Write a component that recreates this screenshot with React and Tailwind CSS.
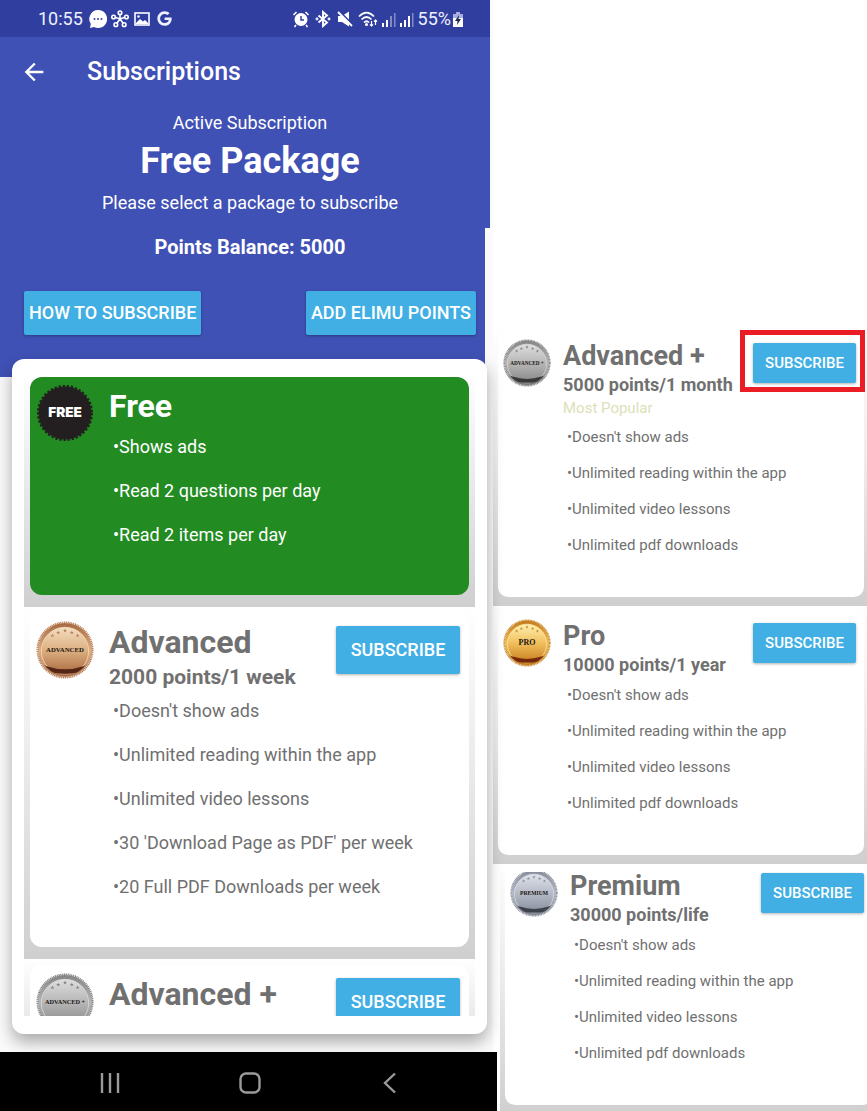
import React from 'react';
import { MdArrowBack } from 'react-icons/md';
import { FaGoogle } from 'react-icons/fa';
import clsx from 'clsx';

const METALS = {
    bronze: { rim: '#b9825c', light: '#f3ddc0', mid: '#dcae7f', dark: '#a8683f', shade: '#4a1c10' },
    silver: { rim: '#858585', light: '#dedede', mid: '#b5b5b5', dark: '#858585', shade: '#303030' },
    gold: { rim: '#c98a2e', light: '#fff0b0', mid: '#f0bd5a', dark: '#c47a1c', shade: '#6b1d08' },
    platinum: { rim: '#8c919c', light: '#dfe2ea', mid: '#b4b9c6', dark: '#868c9a', shade: '#343842' },
};

const PHONE_PLANS = [
    {
        id: 'free', name: 'Free', active: true,
        features: ['Shows ads', 'Read 2 questions per day', 'Read 2 items per day'],
    },
    {
        id: 'advanced', name: 'Advanced', price: '2000 points/1 week', metal: 'bronze', badge: 'ADVANCED',
        features: [
            "Doesn't show ads",
            'Unlimited reading within the app',
            'Unlimited video lessons',
            "30 'Download Page as PDF' per week",
            '20 Full PDF Downloads per week',
        ],
    },
    { id: 'advanced-plus', name: 'Advanced +', metal: 'silver', badge: 'ADVANCED +', features: [] },
];

const UNLIMITED = [
    "Doesn't show ads",
    'Unlimited reading within the app',
    'Unlimited video lessons',
    'Unlimited pdf downloads',
];

const MORE_PLANS = [
    { id: 'm-plus', name: 'Advanced +', price: '5000 points/1 month', note: 'Most Popular', metal: 'silver', badge: 'ADVANCED +', marked: true },
    { id: 'm-pro', name: 'Pro', price: '10000 points/1 year', metal: 'gold', badge: 'PRO' },
    { id: 'm-premium', name: 'Premium', price: '30000 points/life', metal: 'platinum', badge: 'PREMIUM' },
];

const STARS = [[17, 15], [23, 12], [30, 10], [37, 12], [43, 15]];

const Medal = ({ id, metal, label, className }) => {
    const m = METALS[metal];
    return (
        <svg viewBox="0 0 60 60" className={className} aria-hidden="true">
            <defs>
                <linearGradient id={`${id}-face`} x1="0" y1="0" x2="0" y2="1">
                    <stop offset="0" stopColor={m.light} />
                    <stop offset="0.5" stopColor={m.mid} />
                    <stop offset="1" stopColor={m.dark} />
                </linearGradient>
                <linearGradient id={`${id}-rim`} x1="0" y1="0" x2="0" y2="1">
                    <stop offset="0" stopColor={m.dark} />
                    <stop offset="0.5" stopColor={m.mid} />
                    <stop offset="1" stopColor={m.rim} />
                </linearGradient>
                <clipPath id={`${id}-clip`}>
                    <circle cx="30" cy="30" r="26.5" />
                </clipPath>
            </defs>
            <circle cx="30" cy="30" r="28" fill={`url(#${id}-rim)`} />
            <circle cx="30" cy="30" r="28.5" fill="none" stroke={m.rim} strokeWidth="2" strokeDasharray="1.2 0.7" />
            <circle cx="30" cy="31" r="24.5" fill={`url(#${id}-face)`} stroke={m.light} strokeWidth="0.8" />
            <g clipPath={`url(#${id}-clip)`}>
                <path d="M4 44 L12 47 Q30 53 48 47 L56 44 V60 H4 Z" fill={m.shade} opacity="0.9" />
                <path d="M14 53 Q30 56 46 53 L42 58 H18 Z" fill={m.rim} />
            </g>
            {STARS.map(([x, y]) => (
                <path
                    key={x}
                    transform={`translate(${x} ${y})`}
                    d="M0-2 .6-.6 2-.6.9.3 1.3 1.8 0 .9-1.3 1.8-.9.3-2-.6-.6-.6Z"
                    fill={m.rim} />
            ))}
            <text
                x="30" y="32.5" textAnchor="middle"
                fontFamily="'Liberation Serif', serif" fontWeight="700"
                fontSize={label === 'PRO' ? 10 : label.length > 8 ? 6.5 : 7}
                fill="#1a1410">
                {label}
            </text>
        </svg>
    );
};

const FreeBadge = ({ className }) => (
    <svg viewBox="0 0 60 60" className={className} aria-hidden="true">
        <circle cx="30" cy="30" r="27.5" fill="#231f20" />
        <circle cx="30" cy="30" r="28" fill="none" stroke="#231f20" strokeWidth="2" strokeDasharray="2.4 1.9" />
        <text x="30" y="34.5" textAnchor="middle" fontFamily="Inter, sans-serif" fontWeight="900" fontSize="14" fill="#fff">
            FREE
        </text>
    </svg>
);

const ActionButton = ({ children, className }) => (
    <button type="button" className={clsx('rounded-[2px] bg-[#41afe4] font-medium whitespace-nowrap text-white shadow-[0_1px_3px_rgba(0,0,0,0.3)]', className)}>
        {children}
    </button>
);

const PlanCard = ({ plan }) => (
    <li className="bg-linear-to-b from-white via-[#e8e8e8] to-[#cfcfcf] px-1.5 pt-1.5 pb-3">
        <article
            className={clsx(
                'flex items-start rounded-xl px-1.5 pb-[38px]',
                plan.active ? 'bg-[#228b22] text-white' : 'bg-white text-[#707070]',
            )}>
            {plan.active
                ? <FreeBadge className="mt-[7px] size-[58px] shrink-0" />
                : <Medal id={plan.id} metal={plan.metal} label={plan.badge} className="mt-2 size-[58px] shrink-0" />}
            <div className="ml-[15px] min-w-0 flex-1 pt-2">
                <h2 className="text-[32px] leading-[42px] font-bold whitespace-nowrap">{plan.name}</h2>
                {plan.price && <p className="text-[21px] leading-7 font-bold whitespace-nowrap">{plan.price}</p>}
                <ul className="-mt-0.5 pl-1 text-lg leading-11 whitespace-nowrap">
                    {plan.features.map((f) => <li key={f}>•{f}</li>)}
                </ul>
            </div>
            {!plan.active && (
                <ActionButton className="mt-[13px] mr-[3px] -ml-32 h-12 w-31 shrink-0 text-lg">SUBSCRIBE</ActionButton>
            )}
        </article>
    </li>
);

const CompactCard = ({ plan }) => (
    <article className="bg-linear-to-b from-white via-[#ececec] to-[#cfcfcf] pt-[5px] pr-[3px] pb-[9px] pl-[5px]">
        <div className="flex items-start rounded-[10px] bg-white pr-2 pb-[34px] pl-[5px] text-[#707070]">
            <Medal id={plan.id} metal={plan.metal} label={plan.badge} className="mt-2 size-12 shrink-0" />
            <div className="ml-3 min-w-0 flex-1 pt-2">
                <h2 className="text-[27px] leading-[34px] font-bold whitespace-nowrap">{plan.name}</h2>
                <p className="text-lg leading-6 font-bold whitespace-nowrap">{plan.price}</p>
                {plan.note && <p className="text-[15px] leading-[22px] text-[#dde0b8]">{plan.note}</p>}
                <ul className="pl-1 text-[15px] leading-9 whitespace-nowrap">
                    {UNLIMITED.map((f) => <li key={f}>•{f}</li>)}
                </ul>
            </div>
            <div className="relative mt-3 -ml-26 shrink-0">
                <ActionButton className="h-10 w-[103px] text-[15px]">SUBSCRIBE</ActionButton>
                {plan.marked && (
                    <span className="pointer-events-none absolute -top-[13px] -right-[9px] -bottom-[9px] -left-[13px] border-[5px] border-[#ea1c24]" />
                )}
            </div>
        </div>
    </article>
);

const SignalBars = ({ weak }) => (
    <svg viewBox="0 0 14 16" className="h-4 w-3.5" fill="#fff">
        <rect x="0" y="12" width="2" height="4" />
        <rect x="4" y="9" width="2" height="7" />
        <rect x="8" y="5" width="2" height="11" opacity={weak ? 0.4 : 1} />
        <rect x="12" y="2" width="1.5" height="14" opacity="0.4" />
    </svg>
);

const StatusBar = () => (
    <div className="mr-[3px] flex h-[37px] items-center justify-between bg-[#303f9f] pr-[27px] pl-[38px] text-[#eef0ff]">
        <div className="flex items-center gap-1">
            <span className="text-lg">10:55</span>
            <svg viewBox="0 0 18 18" className="ml-0.5 size-[18px]">
                <path d="M9 0a9 9 0 1 1-4 17L1 18l.8-4A9 9 0 0 1 9 0Z" fill="#fff" />
                <circle cx="5.5" cy="9" r="1" fill="#303f9f" />
                <circle cx="9" cy="9" r="1" fill="#303f9f" />
                <circle cx="12.5" cy="9" r="1" fill="#303f9f" />
            </svg>
            <svg viewBox="1 1 16 16" className="size-[18px]" fill="none" stroke="#fff" strokeWidth="1.4">
                <path d="M9 5v4M4.5 7.5 9 9l4.500-1.500M9 9l-3 4M9 9l3 4" />
                <circle cx="9" cy="3.5" r="1.6" />
                <circle cx="3.3" cy="7.2" r="1.6" />
                <circle cx="14.7" cy="7.2" r="1.6" />
                <circle cx="5.3" cy="14" r="1.6" />
                <circle cx="12.7" cy="14" r="1.6" />
            </svg>
            <svg viewBox="0 0 18 18" className="size-[18px]">
                <rect x="2" y="3" width="14" height="12" fill="none" stroke="#fff" strokeWidth="1.6" />
                <path d="M3 13l4-4 3 2.500 2-1.500 3 3v1H3Z" fill="#fff" />
                <circle cx="5.5" cy="6.5" r="1.2" fill="#fff" />
            </svg>
            <FaGoogle size={15} className="ml-0.5" />
        </div>
        <div className="flex items-center gap-1">
            <svg viewBox="0 0 18 18" className="size-[18px]">
                <circle cx="9" cy="9.5" r="6.5" fill="#fff" />
                <path d="M9 6v4h3" fill="none" stroke="#303f9f" strokeWidth="1.5" />
                <path d="M1.500 5 4.500 2M16.500 5 13.500 2M4 15l-1.500 2M14 15l1.500 2" stroke="#fff" strokeWidth="1.6" />
            </svg>
            <svg viewBox="0 0 18 18" className="size-[18px]" fill="none" stroke="#fff" strokeWidth="1.9">
                <path d="M4.500 5.500 13 12.500 9 16V2l4 3.500L4.500 12.500" />
                <circle cx="3" cy="9" r="0.5" />
                <circle cx="15" cy="9" r="0.5" />
            </svg>
            <svg viewBox="0 0 18 18" className="size-[18px]">
                <path d="M2 6h4l7-4.500v15L6 12H2Z" fill="#fff" />
                <path d="M3 1 17 15" stroke="#303f9f" strokeWidth="1.8" />
                <path d="M2 2 16 16" stroke="#fff" strokeWidth="1.8" />
            </svg>
            <svg viewBox="0 0 20 18" className="h-[18px] w-5" fill="none" stroke="#fff" strokeWidth="1.7">
                <path d="M1 6.500Q8.500-1 16 6.500M3.500 9.500q5-5 10 0M6 12.500q2.500-2.500 5 0" />
                <circle cx="8.5" cy="14.5" r="0.7" fill="#fff" />
                <path d="M13.500 11v5M12 14.500l1.500 1.500 1.500-1.500M17.500 15v-5M16 11.500l1.500-1.500 1.500 1.500" strokeWidth="1.2" />
            </svg>
            <SignalBars weak />
            <SignalBars />
            <span className="text-lg">55%</span>
            <svg viewBox="0 0 10 16" className="-ml-0.5 h-4 w-2.5">
                <path d="M3 1h4v2h3v13H0V3h3Z" fill="#a9aee0" />
                <path d="M0 7h10v9H0Z" fill="#fff" />
                <path d="M6 4 2 10h2.500L4 14l4-6H5.500Z" fill="#222a55" />
            </svg>
        </div>
    </div>
);

const NavBar = () => (
    <nav className="relative -mr-1 flex h-[59px] shrink-0 items-center justify-center bg-black pt-0.5 pl-[3px] text-[#9a9a9a]">
        <button type="button" aria-label="Recent apps" className="flex w-35 justify-center">
            <svg viewBox="0 0 22 22" className="size-[22px]" stroke="currentColor" strokeWidth="2.4">
                <path d="M3 1v20M11 1v20M19 1v20" />
            </svg>
        </button>
        <button type="button" aria-label="Home" className="flex w-35 justify-center">
            <svg viewBox="0 0 22 22" className="size-[22px]" fill="none" stroke="currentColor" strokeWidth="2.4">
                <rect x="1.5" y="1.5" width="19" height="19" rx="5.5" />
            </svg>
        </button>
        <button type="button" aria-label="Back" className="flex w-35 justify-center">
            <svg viewBox="0 0 22 22" className="size-[22px]" fill="none" stroke="currentColor" strokeWidth="2.4">
                <path d="M16 1.500 6 11l10 9.500" />
            </svg>
        </button>
    </nav>
);

const Phone = () => (
    <section className="flex h-screen flex-col bg-[#fafafa]">
        <StatusBar />
        <header className="mr-[3px] bg-[#3f51b5] pb-[13px] text-white">
            <div className="flex h-[70px] items-center pl-5">
                <button type="button" aria-label="Back"><MdArrowBack size={28} /></button>
                <h1 className="ml-[39px] text-[25px] font-medium">Subscriptions</h1>
            </div>
            <div className="pt-1 pl-2.5 text-center">
                <p className="text-lg leading-6">Active Subscription</p>
                <p className="mt-1 text-4xl leading-11 font-bold">Free Package</p>
                <p className="mt-2 text-lg leading-6">Please select a package to subscribe</p>
            </div>
        </header>
        <div className="mr-2 bg-[#3f51b5] pt-[7px] pb-[42px] text-white">
            <p className="pl-[15px] text-center text-[20px] leading-6 font-bold">Points Balance: 5000</p>
            <div className="mt-8 flex justify-between pr-[9px] pl-6">
                <ActionButton className="h-11 px-[5px] text-lg">HOW TO SUBSCRIBE</ActionButton>
                <ActionButton className="h-11 px-[5px] text-lg">ADD ELIMU POINTS</ActionButton>
            </div>
        </div>
        <div className="relative -mt-[18px] mr-1.5 mb-[18px] ml-3 flex min-h-0 flex-1 flex-col rounded-xl bg-white pt-3 pr-3 pb-[18px] pl-3 shadow-[0_8px_16px_rgba(0,0,0,0.32)]">
            <ul className="min-h-0 flex-1 overflow-hidden">
                {PHONE_PLANS.map((p) => <PlanCard key={p.id} plan={p} />)}
            </ul>
        </div>
        <NavBar />
    </section>
);

const App = () => (
    <main className="grid min-h-screen grid-cols-[493fr_374fr] bg-white font-[Roboto,sans-serif]">
        <Phone />
        <section className="flex min-w-0 flex-col justify-end overflow-hidden">
            <CompactCard plan={MORE_PLANS[0]} />
            <CompactCard plan={MORE_PLANS[1]} />
            {/* last card is scrolled slightly under the one above */}
            <div className="mt-2 -mr-2 ml-[7px] overflow-hidden">
                <div className="-mt-4 -mb-[3px]">
                    <CompactCard plan={MORE_PLANS[2]} />
                </div>
            </div>
        </section>
    </main>
);

export default App;
